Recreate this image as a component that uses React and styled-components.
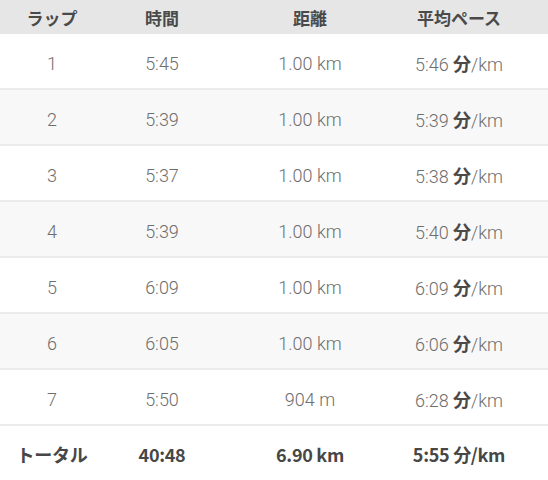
import React from 'react';
import styled, { createGlobalStyle } from 'styled-components';

const GlobalStyle = createGlobalStyle`
  body {
    margin: 0;
    background: #ffffff;
    font-family: Roboto, 'Noto Sans CJK JP', sans-serif;
  }
`;

const laps = [
  { lap: 1, time: '5:45', dist: '1.00 km', pace: '5:46' },
  { lap: 2, time: '5:39', dist: '1.00 km', pace: '5:39' },
  { lap: 3, time: '5:37', dist: '1.00 km', pace: '5:38' },
  { lap: 4, time: '5:39', dist: '1.00 km', pace: '5:40' },
  { lap: 5, time: '6:09', dist: '1.00 km', pace: '6:09' },
  { lap: 6, time: '6:05', dist: '1.00 km', pace: '6:06' },
  { lap: 7, time: '5:50', dist: '904 m', pace: '6:28' },
];

const Table = styled.div`
  width: 548px;
  height: 480px;
  overflow: hidden;
`;

const Row = styled.div`
  display: grid;
  grid-template-columns: 104px 116px 180px 118px 30px;
  align-items: center;
  box-sizing: border-box;
  height: ${(p) => p.$height || 56}px;
  padding-top: ${(p) => p.$pad || 0}px;
  background: ${(p) => p.$bg || '#ffffff'};
  border-bottom: ${(p) => (p.$border ? '2px solid #ebebeb' : 'none')};
`;

const Cell = styled.div`
  text-align: center;
  white-space: nowrap;
  font-family: 'Roboto Light', Roboto, 'Noto Sans CJK JP', sans-serif;
  font-weight: 300;
  font-size: 18px;
  color: #6e6e6e;
`;

const HeadCell = styled(Cell)`
  font-family: 'Noto Sans CJK JP', sans-serif;
  font-weight: 700;
  font-size: 17px;
  color: #4a4a4a;
`;

const TotalCell = styled(Cell)`
  font-family: 'Noto Sans CJK JP', sans-serif;
  font-weight: 700;
  font-size: 18px;
  color: #474747;
  letter-spacing: -0.3px;
`;

const Fun = styled.span`
  font-family: 'Noto Sans CJK JP', sans-serif;
  font-weight: 700;
  color: #4a4a4a;
`;

export default function App() {
  return (
    <Table>
      <GlobalStyle />
      <Row $height={34} $bg="#e6e6e6">
        <HeadCell>ラップ</HeadCell>
        <HeadCell>時間</HeadCell>
        <HeadCell>距離</HeadCell>
        <HeadCell>平均ペース</HeadCell>
      </Row>
      {laps.map((l, i) => (
        <Row key={l.lap} $bg={i % 2 ? '#f8f8f8' : '#ffffff'} $pad={4} $border>
          <Cell>{l.lap}</Cell>
          <Cell>{l.time}</Cell>
          <Cell>{l.dist}</Cell>
          <Cell>
            {l.pace} <Fun>分</Fun>/km
          </Cell>
        </Row>
      ))}
      <Row $height={56}>
        <TotalCell>トータル</TotalCell>
        <TotalCell>40:48</TotalCell>
        <TotalCell>6.90 km</TotalCell>
        <TotalCell>5:55 分/km</TotalCell>
      </Row>
    </Table>
  );
}
